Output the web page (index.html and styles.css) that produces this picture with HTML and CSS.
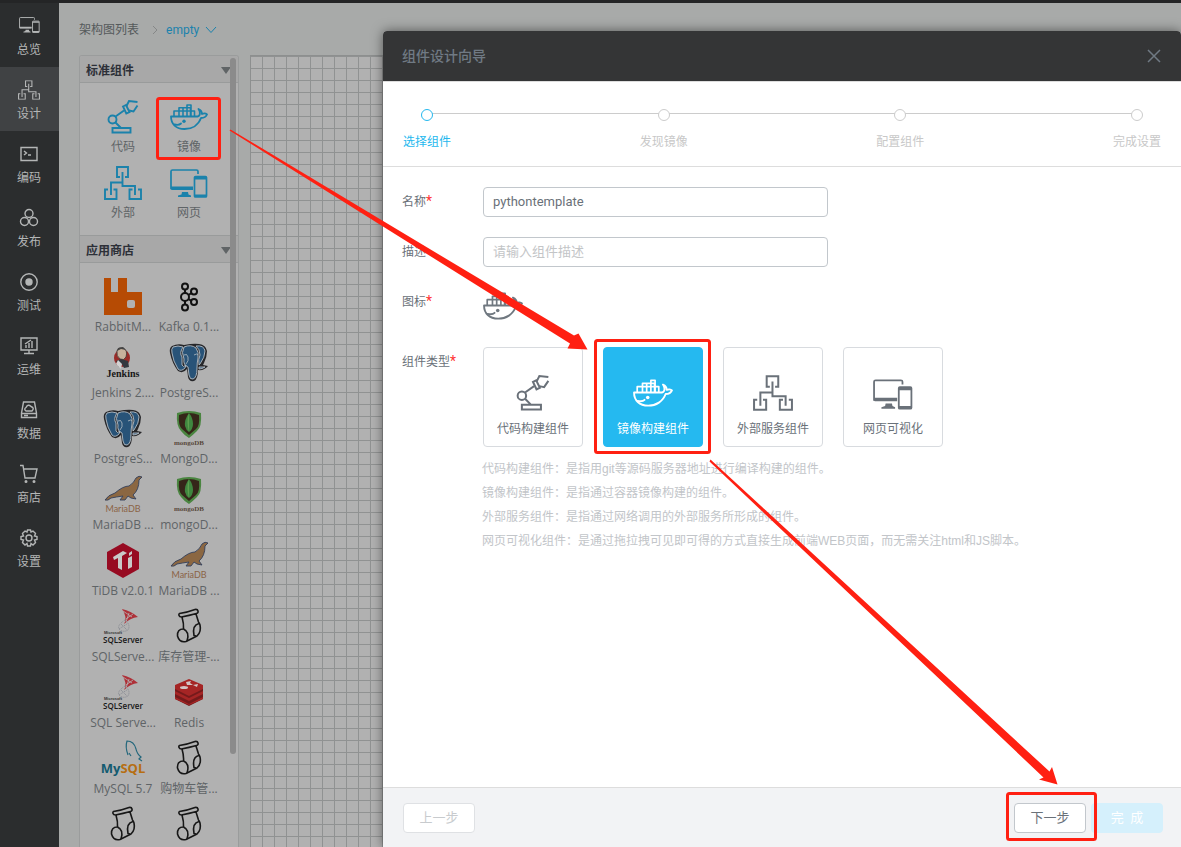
FILE: index.html
```html
<!DOCTYPE html>
<html lang="zh-CN">
<head>
<meta charset="utf-8">
<meta name="viewport" content="width=device-width, initial-scale=1">
<title>组件设计向导</title>
<link rel="stylesheet" href="styles.css">
</head>
<body>
<svg class="defs" aria-hidden="true">
  <symbol id="whale" viewBox="0 0 38 26"><g fill="none" stroke="currentColor" stroke-width="1.8" stroke-linejoin="round" stroke-linecap="round"><path d="M1 12.5H27.500C30.500 12 30.500 8 28.500 5C31 6 32 8 32 10C33.500 9.300 36 9.500 37 10.500C36 13 33.500 14 31 14C28.500 21 22 25 14.500 25C6 25 1 20 1 12.500Z"/><path d="M4.500 20.500C9 21.500 10 20.500 11 19.500"/><path stroke-width="1.600" d="M4 12V7H24.500V12M9 12V3.800H20.500V12M13 12V3.800M17 12V1H21V12"/></g><circle cx="14" cy="17.300" r="1.700" fill="currentColor"/></symbol>
  <symbol id="robot" viewBox="0 0 31 34"><g fill="none" stroke="currentColor" stroke-width="1.900"><circle cx="5" cy="19.500" r="4"/><path d="M8 16.500L16.500 10.500M8 22.500L13.500 28M5 28H23V32.500H5Z"/><path d="M15.500 6.500L18.500 5L22 12L18.800 13.500Z"/><path d="M19 6L21.500 1L30 2M21.500 10.500L26 11.500L30 5.500"/></g></symbol>
  <symbol id="tree" viewBox="0 0 38 34"><path fill="none" stroke="currentColor" stroke-width="1.900" d="M16 11H13V1H24V11H21M18.500 6V20H31V29M18.500 16.500H7V29M4 23.500H1V33H12.500V23.500H9.500M28.500 23.500H25.500V33H37V23.500H34"/></symbol>
  <symbol id="screen" viewBox="0 0 38 29"><path fill="none" stroke="currentColor" stroke-width="1.700" d="M28 5V2.500Q28 1 26.500 1H2.500Q1 1 1 2.500V19.500H22M25.500 7.500H35.500Q36.500 7.500 36.500 8.500V27Q36.500 28 35.500 28H25.500Q24.500 28 24.500 27V8.500Q24.500 7.500 25.500 7.500Z"/><path fill="currentColor" d="M1 17.500H23V21H2Q1 21 1 20ZM12 23H18L18.500 25.500L21 26.500V28H8V26.500L11.500 25.500ZM24.500 8H36.500V10.500H24.500ZM24.500 25.500H36.500V28H24.500Z"/></symbol>
  <symbol id="elephant" viewBox="0 0 40 40"><path fill="#27272a" d="M3 3Q9 0 15 2Q25 0 30 1Q37 2 38 8Q38 14 35 20L34 22L39 23Q35 28 29 27Q29 36 25 38Q20 39 19 34L18 26Q14 31 9 28Q3 20 1 10Q0 5 3 3Z"/><path fill="#285378" stroke="#b4bcc3" stroke-width=".9" d="M4 4Q9 2 14 4Q10 10 13 14L13 22Q14 25 17 22L16 25Q12 29 9 26Q4 18 3 10Q2 6 4 4ZM15 4Q22 1 27 5Q30 9 29 15Q28 20 28 25Q28 35 24 36Q21 37 20 32L19 24Q14 22 15 16Q12 9 15 4ZM27 3Q35 2 36 8Q36 14 31 21L30 22Q29 16 31 12Q31 6 27 3ZM30 24L36 24Q33 26 30 26Z"/><path fill="none" stroke="#b4bcc3" stroke-width=".8" d="M15 12Q18 10 19 14Q20 18 17 21M25 12Q28 10 29 12"/></symbol>
  <symbol id="mongo" viewBox="0 0 40 40"><path fill="#4a8540" d="M8 4Q20 0 32 4Q33 18 28 22Q24 26 20 29Q15 26 12 22Q7 17 8 4Z"/><path fill="#352619" d="M10 6Q20 2 30 6Q31 17 27 20L20 26L13 20Q9 16 10 6Z"/><path fill="#3f873f" d="M20 4Q15 11 16 17Q17 21 20 23Q24 20 24 15Q24 9 20 4Z"/><path fill="#5e9e4f" d="M20 4Q17 13 20 23Z"/></symbol>
  <symbol id="seal" viewBox="0 0 40 40"><path fill="#8b6742" stroke="#32405b" stroke-width=".9" d="M2 25Q5 20 12 18Q20 11 26 11Q31 8 33 3Q36 0 39 2L36 5Q36 15 30 20L33 24L28 23L25 21L22 25H17L20 21Q13 22 8 23Q5 26 2 25Z"/></symbol>
  <symbol id="sqlserver" viewBox="0 0 40 40"><path fill="#ae3038" d="M19 2Q28 4 35 10Q27 11 21 17Q25 11 19 2Z"/><path fill="none" stroke="#b5b5b5" stroke-width=".8" d="M20 4L29 10M23 12L30 7M23 15L26 6"/><path fill="none" stroke="#858991" stroke-dasharray="1 1" d="M22 13Q14 18 16 22Q20 26 25 23Q28 18 22 13M18 17L24 23M16 22L24 17"/></symbol>
  <symbol id="sock" viewBox="0 0 40 40"><g fill="none" stroke="#171717" stroke-width="1.600" stroke-linejoin="round"><path d="M10.500 6.500Q18 5.500 26 2.500Q28.500 2 29 4Q29.500 6 27.500 6.500Q20 8.500 12.500 10Q10.500 10 10 8.500Q9.500 7 10.500 6.500ZM13 10Q15 17 14.500 22Q8 22 8.500 29Q10.500 36 17 34.500L28 29Q32.500 25 31 18Q30.500 16 29.500 15L27 7"/><path d="M14.500 22Q21 25 18 34M30 16.500Q23 18 25 28.500L27 29"/></g></symbol>
</svg>

<div class="app">
  <nav class="sidebar" aria-label="主导航">
    <a href="#"><svg viewBox="0 0 38 29" width="21" height="18"><use href="#screen"/></svg><span>总览</span></a>
    <a href="#" class="active" aria-current="page"><svg viewBox="0 0 38 34" width="22" height="20"><use href="#tree"/></svg><span>设计</span></a>
    <a href="#"><svg class="line" viewBox="0 0 20 20"><path d="M2 3.500H18V16.500H2ZM5 7L7.500 9L5 11M9 11H12"/></svg><span>编码</span></a>
    <a href="#"><svg class="line" viewBox="0 0 20 20"><circle cx="10" cy="5.500" r="4"/><circle cx="5.500" cy="13.500" r="4"/><circle cx="14.500" cy="13.500" r="4"/></svg><span>发布</span></a>
    <a href="#"><svg class="line" viewBox="0 0 20 20"><circle cx="10" cy="10" r="8.200"/><circle cx="10" cy="10" r="3" fill="currentColor"/></svg><span>测试</span></a>
    <a href="#"><svg class="line" viewBox="0 0 20 20"><path d="M2 2H18V14H2ZM5 17.500H15M10 14V17M7 12V9M10 12V7M13 12V5M6 8L12 4"/></svg><span>运维</span></a>
    <a href="#"><svg class="line" viewBox="0 0 20 20"><path d="M4.500 2H15.500L17.500 13V17.500H2.500V13ZM2.500 13.500H17.500M5 15.500H9M7 11Q4.500 9 7 7.500Q9 3.500 12 6.500Q16 8 13 11Z"/></svg><span>数据</span></a>
    <a href="#"><svg class="line" viewBox="0 0 20 20"><path d="M1 1.500H4L6 14H16L18 5H5"/><circle cx="7" cy="17.500" r=".8"/><circle cx="15" cy="17.500" r=".8"/></svg><span>商店</span></a>
    <a href="#"><svg class="line" viewBox="0 0 20 20"><path d="M8 4L8.500 2H11.500L12 4L14 3L16.500 5.500L15.500 8L18 8.500V11.500L15.500 12L16.500 14.500L14 17L12 15.500L11.500 18H8.500L8 15.500L6 17L3.500 14.500L4.500 12L2 11.500V8.500L4.500 8L3.500 5.500L6 3Z"/><circle cx="10" cy="10" r="3"/></svg><span>设置</span></a>
  </nav>

  <main class="main">
    <nav class="crumbs" aria-label="路径">
      <a href="#">架构图列表</a>
      <svg class="sep" viewBox="0 0 6 10" width="6" height="10"><path d="M1 1L5 5L1 9" fill="none" stroke="#858787"/></svg>
      <a href="#" class="current">empty <svg viewBox="0 0 12 8" width="12" height="8"><path d="M1 1L6 6.500L11 1" fill="none" stroke="currentColor"/></svg></a>
    </nav>
    <div class="workspace">
      <aside class="palette">
        <h2>标准组件<i class="caret"></i></h2>
        <ul class="items basic">
          <li><svg class="i-robot"><use href="#robot"/></svg><span>代码</span></li>
          <li><svg class="i-whale"><use href="#whale"/></svg><span>镜像</span></li>
          <li><svg class="i-tree"><use href="#tree"/></svg><span>外部</span></li>
          <li><svg class="i-screen"><use href="#screen"/></svg><span>网页</span></li>
        </ul>
        <h2>应用商店<i class="caret"></i></h2>
        <ul class="items">
          <li><svg viewBox="0 0 40 40"><path fill="#b64b04" d="M1 1H8V15H15V1H24V15H39V38H1Z"/><rect x="24" y="23" width="8" height="8" rx="2" fill="#b1b1b1"/></svg><span>RabbitM...</span></li>
          <li><svg viewBox="0 0 40 40"><g fill="none" stroke="#111" stroke-width="2"><circle cx="16" cy="20" r="4"/><circle cx="16" cy="9.500" r="3"/><circle cx="16" cy="30.500" r="3"/><circle cx="25" cy="14.500" r="3"/><circle cx="25" cy="25" r="3"/><path d="M16 12V16M16 24V28M19.500 18L22.500 16M19.500 22L22.500 24"/></g></svg><span>Kafka 0.1...</span></li>
          <li><svg viewBox="0 0 40 40"><ellipse cx="19" cy="15" rx="8" ry="9" fill="#992b28"/><path fill="#c7b19c" stroke="#3f3735" stroke-width=".8" d="M14 8Q15 4 20 5Q25 7 23 14Q21 18 17 16Q13 13 14 8Z"/><path fill="#34383e" d="M13 18L18 16L25 18L26 24L21 25L19 21L16 24Z"/><path fill="#d2d2d2" d="M15 17L19 21L18 26L13 21Z"/><path fill="#444" d="M14 8L15 5L20 4L23 7L18 6Z"/><text x="20" y="34" text-anchor="middle" font-family="Liberation Serif, serif" font-weight="700" font-size="10" fill="#171717">Jenkins</text></svg><span>Jenkins 2....</span></li>
          <li><svg><use href="#elephant"/></svg><span>PostgreS...</span></li>
          <li><svg><use href="#elephant"/></svg><span>PostgreS...</span></li>
          <li><svg viewBox="0 0 40 40"><use href="#mongo"/><text class="t-mongo" x="20" y="36">mongoDB</text></svg><span>MongoD...</span></li>
          <li><svg viewBox="0 0 40 40"><use href="#seal"/><text class="t-maria" x="20" y="37">MariaDB</text></svg><span>MariaDB ...</span></li>
          <li><svg viewBox="0 0 40 40"><use href="#mongo"/><text class="t-mongo" x="20" y="36">mongoDB</text></svg><span>mongoD...</span></li>
          <li><svg viewBox="0 0 40 40"><path fill="#970b22" d="M20 2L36 11V28L20 37L4 28V11Z"/><path fill="#c9c9c9" d="M10 16L20 10L24 12L19 15V29L15 27V17L11 19ZM25 17L29 15V26L25 28ZM26 12L29 10V13L26 15Z"/></svg><span>TiDB v2.0.1</span></li>
          <li><svg viewBox="0 0 40 40"><use href="#seal"/><text class="t-maria" x="20" y="37">MariaDB</text></svg><span>MariaDB ...</span></li>
          <li><svg viewBox="0 0 40 40"><use href="#sqlserver"/><text class="t-ms" x="1" y="27">Microsoft</text><text class="t-sql" x="20" y="36">SQLServer</text></svg><span>SQLServe...</span></li>
          <li><svg><use href="#sock"/></svg><span>库存管理-...</span></li>
          <li><svg viewBox="0 0 40 40"><use href="#sqlserver"/><text class="t-ms" x="1" y="27">Microsoft</text><text class="t-sql" x="20" y="36">SQLServer</text></svg><span>SQL Serve...</span></li>
          <li><svg viewBox="0 0 40 40"><path fill="#741a1b" d="M6 13V26L20 33L34 26V13Z"/><path fill="#a52525" d="M6 12L20 6L34 12V16L20 23L6 16ZM6 18L20 25L34 18V21L20 28L6 21ZM6 24L20 31L34 24V26L20 32L6 26Z"/><path fill="#d2c5c5" d="M17 9L22 8L21 10L24 12L18 12ZM24 12L29 11L28 14Z"/><ellipse cx="15" cy="14.500" rx="4" ry="1.500" fill="#d2c5c5"/></svg><span>Redis</span></li>
          <li><svg viewBox="0 0 40 40"><path fill="none" stroke="#24677c" stroke-width="1.200" d="M25 16Q22 8 24 2Q31 2 33 10Q34 15 38 18L36 20L39 22M26 14L28 17"/><text class="t-mysql" x="20" y="34">My<tspan fill="#b66e12">SQL</tspan></text></svg><span>MySQL 5.7</span></li>
          <li><svg><use href="#sock"/></svg><span>购物车管...</span></li>
          <li><svg><use href="#sock"/></svg></li>
          <li><svg><use href="#sock"/></svg></li>
        </ul>
        <div class="scrollbar"></div>
      </aside>
      <div class="canvas"></div>
    </div>
  </main>
</div>

<section class="dialog" role="dialog" aria-labelledby="dialog-title">
  <header class="dialog-head">
    <h1 id="dialog-title">组件设计向导</h1>
    <button type="button" class="close" aria-label="关闭"><svg viewBox="0 0 14 14" width="14" height="14"><path d="M1 1L13 13M13 1L1 13" fill="none" stroke="currentColor" stroke-width="1.500"/></svg></button>
  </header>
  <ol class="steps">
    <li class="on">选择组件</li><li>发现镜像</li><li>配置组件</li><li>完成设置</li>
  </ol>
  <form class="form">
    <div class="row"><label for="name">名称<b>*</b></label><input type="text" id="name" value="pythontemplate"></div>
    <div class="row"><label for="desc">描述</label><input type="text" id="desc" placeholder="请输入组件描述"></div>
    <div class="row"><span class="label">图标<b>*</b></span><svg class="chosen"><use href="#whale"/></svg></div>
    <div class="row types" role="radiogroup" aria-labelledby="type-label">
      <span class="label" id="type-label">组件类型<b>*</b></span>
      <div class="cards">
        <label class="card"><input type="radio" name="type"><svg class="i-robot"><use href="#robot"/></svg>代码构建组件</label>
        <label class="card"><input type="radio" name="type" checked><svg class="i-whale"><use href="#whale"/></svg>镜像构建组件</label>
        <label class="card"><input type="radio" name="type"><svg class="i-tree"><use href="#tree"/></svg>外部服务组件</label>
        <label class="card"><input type="radio" name="type"><svg class="i-screen"><use href="#screen"/></svg>网页可视化</label>
      </div>
    </div>
    <div class="help">
      <p>代码构建组件：是指用git等源码服务器地址进行编译构建的组件。</p>
      <p>镜像构建组件：是指通过容器镜像构建的组件。</p>
      <p>外部服务组件：是指通过网络调用的外部服务所形成的组件。</p>
      <p>网页可视化组件：是通过拖拉拽可见即可得的方式直接生成前端WEB页面，而无需关注html和JS脚本。</p>
    </div>
  </form>
  <footer class="dialog-foot">
    <button type="button" class="btn prev" disabled>上一步</button>
    <button type="button" class="btn">下一步</button>
    <button type="button" class="btn done" disabled>完&ensp;成</button>
  </footer>
</section>

<svg class="marks" aria-hidden="true">
  <g fill="none" stroke="#ff2012" stroke-width="3"><rect x="157.500" y="98.500" width="62" height="60" rx="2"/><rect x="595.500" y="340.500" width="114" height="112" rx="2"/><rect x="1007.500" y="793.500" width="88" height="46" rx="2"/></g>
  <path fill="#ff2012" d="M230.500 129.500L574 335.500L578.500 333.500L587.500 349.500L567.500 348.500L570 343.500L229.500 130.500Z"/>
  <path fill="#ff2012" d="M710.500 459.500L1049.500 771.500L1052 767L1057.500 784.500L1039 779.500L1043.500 777.500L709.500 461.500Z"/>
</svg>
</body>
</html>
```

FILE: styles.css
```css
* { box-sizing: border-box; }

body {
  margin: 0;
  overflow: hidden;
  background: #a8aaa9;
  color: #6a7179;
  font: 12px/18px Roboto, "Noto Sans CJK SC", sans-serif;
}

h1, h2, p, ul, ol { margin: 0; padding: 0; list-style: none; }
a { color: inherit; text-decoration: none; }
button, input { font: inherit; color: inherit; }

.defs { position: absolute; width: 0; height: 0; }

.app {
  display: flex;
  height: 100vh;
  border-top: 3px solid #242526;
}

.sidebar {
  flex: none;
  width: 59px;
  background: #2b2d2e;
  color: #b4b6b6;
}
.sidebar a {
  display: flex;
  flex-direction: column;
  align-items: center;
  justify-content: space-between;
  height: 64px;
  padding: 13px 1px 8px 0;
}
.sidebar .active { background: #404244; }
.sidebar svg { flex: none; }
.line { width: 20px; height: 20px; fill: none; stroke: currentColor; stroke-width: 1.4; }

.main {
  flex: 1;
  display: flex;
  flex-direction: column;
  min-width: 0;
}
.crumbs {
  display: flex;
  align-items: center;
  gap: 8px;
  height: 52px;
  padding: 2px 20px 0;
  color: #55595b;
}
.crumbs .sep { margin-left: 5px; }
.crumbs .current { color: #1b82ad; }
.crumbs .current svg { margin-left: 3px; }

.workspace {
  flex: 1;
  display: flex;
  gap: 11px;
  min-height: 0;
  padding-left: 20px;
}
.palette {
  position: relative;
  flex: none;
  width: 160px;
  overflow: hidden;
  border: 1px solid #9a9c9c;
  border-bottom: 0;
  border-radius: 3px 3px 0 0;
  background: #b1b1b1;
}
.palette h2 {
  display: flex;
  align-items: center;
  justify-content: space-between;
  height: 27px;
  padding: 3px 7px 0 6px;
  border-bottom: 1px solid #999b9b;
  background: #a8a8a8;
  color: #2d3038;
  font-size: 12px;
  font-weight: 700;
}
.items + h2 { height: 28px; border-top: 1px solid #999b9b; }
.caret {
  border: 5px solid transparent;
  border-top: 7px solid #606466;
  border-bottom: 0;
}
.items {
  display: grid;
  grid-template-columns: 66px 66px;
  grid-auto-rows: 66px;
  padding: 14px 10px 6px;
  font-family: "Open Sans", "Noto Sans CJK SC", sans-serif;
  color: #5f6467;
}
.items li {
  display: flex;
  flex-direction: column;
  align-items: center;
  justify-content: space-between;
  padding-bottom: 7px;
  white-space: nowrap;
}
.items svg { width: 40px; height: 40px; overflow: visible; }
.basic svg { color: #1b82ab; }
.basic .i-robot, .basic .i-tree { height: 34px; margin-top: 3px; }
.basic .i-whale { width: 38px; height: 26px; margin-top: 7px; }
.basic .i-screen { width: 38px; height: 29px; margin-top: 6px; }

.items text { text-anchor: middle; }
.t-mongo { font: 700 7px "Liberation Serif", serif; fill: #57473a; }
.t-maria { font: 9px Lato, sans-serif; fill: #8b6346; }
.items .t-ms { font: 700 4px "Liberation Sans", sans-serif; fill: #333; text-anchor: start; }
.t-sql { font: 600 8px "Open Sans", sans-serif; fill: #171717; }
.t-mysql { font: 700 13px "Open Sans", sans-serif; fill: #145b70; }

.scrollbar {
  position: absolute;
  top: 2px;
  right: 2px;
  width: 6px;
  height: 696px;
  border-radius: 3px;
  background: #8b8b8b;
}

.canvas {
  flex: 1;
  border: solid #8d8f8f;
  border-width: 1px 0 0 1px;
  background:
    repeating-linear-gradient(90deg, transparent 0 11px, #909292 11px 12px),
    repeating-linear-gradient(#909292 0 1px, transparent 1px 12px),
    #b1b1b1;
}

.dialog {
  position: absolute;
  inset: 31px 0 0 383px;
  display: flex;
  flex-direction: column;
  border-radius: 4px 4px 0 0;
  background: #fff;
  box-shadow: 0 0 12px rgba(0, 0, 0, .5);
}
.dialog-head {
  display: flex;
  align-items: center;
  justify-content: space-between;
  height: 50px;
  padding: 0 20px 0 19px;
  border-radius: 4px 4px 0 0;
  background: #343536;
  color: #707a84;
}
.dialog-head h1 { font-size: 14px; font-weight: 500; }
.close { display: flex; padding: 0; border: 0; background: none; }

.steps {
  position: relative;
  display: flex;
  justify-content: space-between;
  height: 86px;
  padding: 27px 20px 0;
  border-top: 1px solid #ddd;
  border-bottom: 1px solid #ddd;
  color: #c8c8c8;
}
.steps::before {
  content: "";
  position: absolute;
  top: 31px;
  left: 45px;
  right: 45px;
  height: 1px;
  background: #ccc;
}
.steps li {
  position: relative;
  display: flex;
  flex-direction: column;
  align-items: center;
  gap: 12px;
}
.steps li::before {
  content: "";
  width: 10px;
  height: 10px;
  border: 1px solid #ccc;
  border-radius: 50%;
  background: #fff;
}
.steps .on { color: #24b8ee; }
.steps .on::before { border-color: #24b8ee; }

.form {
  flex: 1;
  padding: 20px 20px 20px 19px;
  overflow: hidden;
}
.row {
  display: grid;
  grid-template: 30px / 81px 1fr;
  align-items: center;
  margin-bottom: 20px;
}
.row b { color: #f33; font-size: 14px; font-weight: 400; line-height: 12px; }
.row input[type="text"] {
  width: 345px;
  max-width: 100%;
  height: 30px;
  padding: 0 9px 2px;
  border: 1px solid #c2c7cc;
  border-radius: 4px;
  background: #fff;
  font-size: 13px;
}
.row input::placeholder { color: #c3c5c7; }
.chosen { align-self: start; width: 40px; height: 28px; margin-top: 5px; color: #707880; }
.types {
  grid-template-rows: auto;
  align-items: start;
  margin: 30px 0 10px;
}
.types .label { padding-top: 6px; }
.cards { display: flex; gap: 20px; }
.card {
  position: relative;
  display: flex;
  flex-direction: column;
  align-items: center;
  justify-content: flex-end;
  gap: 9px;
  width: 100px;
  height: 100px;
  padding-bottom: 8px;
  border: 1px solid #d8dbdf;
  border-radius: 4px;
}
.card:has(:checked) { border-color: #25b9f0; background: #25b9f0; color: #fff; }
.card input { position: absolute; inset: 0; margin: 0; opacity: 0; }
.card svg { width: 40px; height: 36px; }
.card .i-whale { height: 28px; margin-bottom: 4px; }
.card .i-screen { height: 31px; margin-bottom: 1px; }

.help {
  padding-left: 80px;
  color: #c2c5c9;
  font-family: "Liberation Sans", "Noto Sans CJK SC", sans-serif;
  line-height: 24px;
}

.dialog-foot {
  display: flex;
  gap: 5px;
  height: 60px;
  padding: 15px 18px 0 20px;
  border-top: 1px solid #ddd;
  background: #f2f3f5;
}
.btn {
  width: 72px;
  height: 30px;
  padding: 0;
  border: 1px solid #c2c7cc;
  border-radius: 4px;
  background: #fff;
  font-size: 13px;
}
.prev { margin-right: auto; border-color: #dfe1e4; color: #c8cbce; }
.done { border-color: #d5f0fc; background: #d5f0fc; color: #fff; }

.marks {
  position: absolute;
  top: 0;
  left: 0;
  width: 100%;
  height: 100%;
  pointer-events: none;
}
```
